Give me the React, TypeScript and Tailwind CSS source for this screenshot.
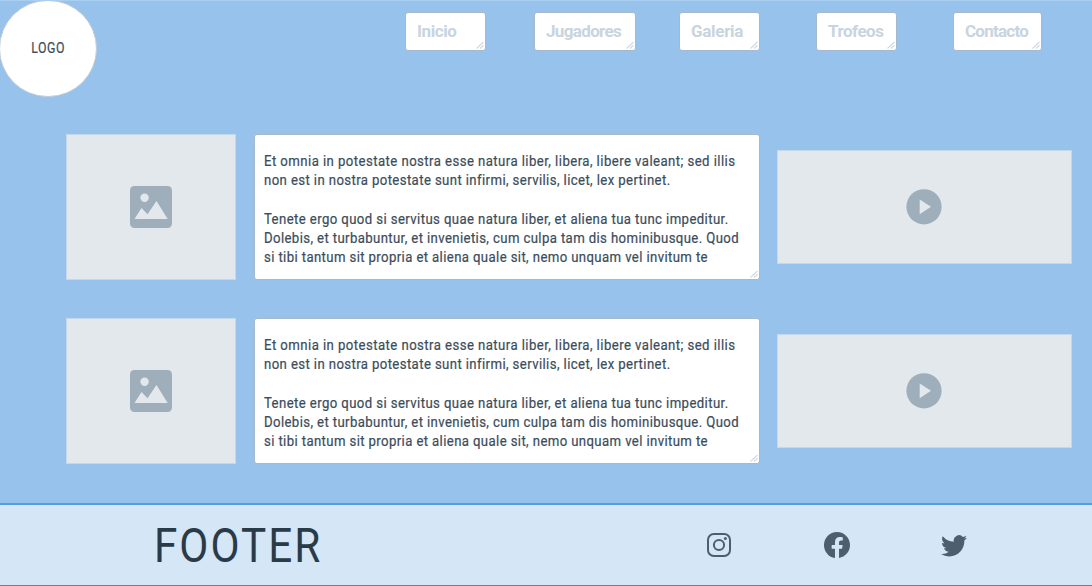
import { BsFacebook, BsTwitter } from "react-icons/bs";

const navItems = [
  { label: "Inicio", box: "w-[81px]", text: "tracking-[-0.4px]" },
  { label: "Jugadores", box: "ml-12 w-[102px]", text: "tracking-[-0.65px]" },
  { label: "Galeria", box: "ml-[43px] w-[81px]", text: "tracking-[-0.3px]" },
  { label: "Trofeos", box: "ml-14 w-[81px]", text: "tracking-[-0.5px]" },
  { label: "Contacto", box: "ml-14 w-[89px]", text: "tracking-[-0.75px]" },
];

const lines = [
  { text: "Et omnia in potestate nostra esse natura liber, libera, libere valeant; sed illis", cls: "tracking-[0.47px]" },
  { text: "non est in nostra potestate sunt infirmi, servilis, licet, lex pertinet.", cls: "tracking-[0.42px]" },
  { text: "", cls: "" },
  { text: "Tenete ergo quod si servitus quae natura liber, et aliena tua tunc impeditur.", cls: "tracking-[0.43px]" },
  { text: "Dolebis, et turbabuntur, et invenietis, cum culpa tam dis hominibusque. Quod", cls: "tracking-[0.41px]" },
  { text: "si tibi tantum sit propria et aliena quale sit, nemo unquam vel invitum te", cls: "tracking-[0.41px]" },
];

function Grip() {
  return (
    <svg className="absolute right-[1px] bottom-[1px] h-2 w-2" viewBox="0 0 8 8" fill="none" stroke="#d3dce3" strokeWidth="1.3">
      <path d="M0.5 7.5L7.5 1M4 7.5L7.5 4.2" />
    </svg>
  );
}

function ImageBox() {
  return (
    <div className="flex h-[146px] w-[170px] items-center justify-center border border-[#c3d8ea] bg-[#e2e8ec]">
      <svg className="h-[42px] w-[42px]" viewBox="0 0 42 42">
        <rect width="42" height="42" rx="4.5" fill="#9eaebb" />
        <circle cx="14.6" cy="11.8" r="4.2" fill="#e2e8ec" />
        <path d="M4.5 33L11.5 22L17.5 28.3L26.5 15L37.7 33Z" fill="#e2e8ec" />
      </svg>
    </div>
  );
}

function TextBox() {
  return (
    <div className="relative ml-[18px] h-[146px] w-[506px] rounded-[3px] border border-[#a5b9ca] bg-white pt-[17px] pl-[9px] text-[14px] leading-[19.25px] text-[#3b4d5b] [-webkit-text-stroke:0.2px_#3b4d5b]">
      {lines.map((l, i) => (
        <div key={i} className="h-[19.25px] origin-left scale-x-[0.94] whitespace-nowrap">
          <span className={l.cls}>{l.text}</span>
        </div>
      ))}
      <Grip />
    </div>
  );
}

function VideoBox() {
  return (
    <div className="ml-[17px] flex h-[114px] w-[295px] items-center justify-center border border-[#c3d8ea] bg-[#e2e8ec] pr-[2px]">
      <svg className="h-9 w-9" viewBox="0 0 36 36">
        <circle cx="18" cy="17.8" r="17.6" fill="#9eaebb" />
        <path d="M13.7 10.5L25 17.8L13.7 25.3Z" fill="#e2e8ec" />
      </svg>
    </div>
  );
}

function Row() {
  return (
    <div className="flex h-[146px] items-center pl-[66px]">
      <ImageBox />
      <TextBox />
      <VideoBox />
    </div>
  );
}

export default function App() {
  return (
    <div className="flex h-[586px] w-[1092px] flex-col overflow-hidden border-t border-[#a9ceef] bg-[#96c2eb] font-['Roboto',sans-serif]">
      <header className="flex h-[133px] items-start">
        <div className="-mt-px -ml-px flex h-[97px] w-[98px] items-center justify-center rounded-full border border-[#c0cbd4] bg-white text-[14px] text-[#3b4d5b] [-webkit-text-stroke:0.2px_#3b4d5b]">
          <span className="scale-x-[0.88] tracking-[0.6px]">LOGO</span>
        </div>
        <nav className="mt-[11px] ml-[308px] flex">
          {navItems.map((n) => (
            <div
              key={n.label}
              className={`relative flex h-[39px] items-center rounded-[3px] border border-[#a5b9ca] bg-white pt-px pl-[11px] text-[17px] font-bold text-[#c8d4de] ${n.box}`}
            >
              <span className={n.text}>{n.label}</span>
              <Grip />
            </div>
          ))}
        </nav>
      </header>
      <main className="flex h-[369px] flex-col gap-[38px]">
        <Row />
        <Row />
      </main>
      <footer className="flex h-[83px] items-center border-t-2 border-b border-t-[#529fe0] border-b-[#2f8fe2] bg-[#d5e6f6] text-[#4c5f6e]">
        <div className="w-[552px] pt-[2px] pl-[154px] text-[48px] leading-none text-[#2a3b48]">
          <span className="inline-block origin-left scale-x-[0.88] tracking-[2.3px]">FOOTER</span>
        </div>
        <div className="ml-[155px] flex items-center">
          <svg className="h-6 w-6" viewBox="0 0 24 24" fill="none" stroke="currentColor" strokeWidth="2">
            <rect x="1" y="1" width="22" height="22" rx="5.8" />
            <circle cx="12" cy="12" r="5.1" />
            <circle cx="18.4" cy="5.6" r="1.5" fill="currentColor" stroke="none" />
          </svg>
          <BsFacebook className="ml-[93px] h-[26px] w-[26px]" />
          <BsTwitter className="ml-[91px] h-[26px] w-[26px]" />
        </div>
      </footer>
    </div>
  );
}
